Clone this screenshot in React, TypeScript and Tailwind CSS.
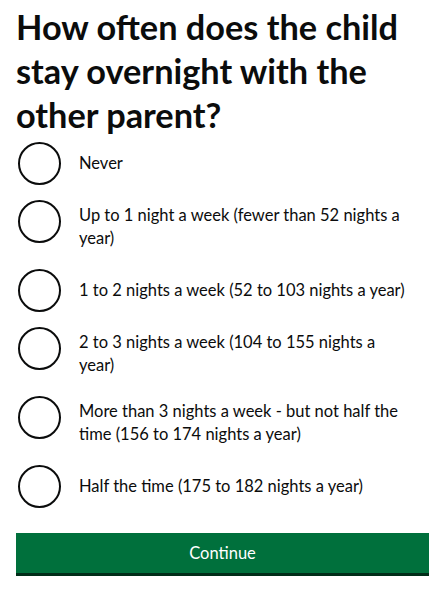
const options = [
  'Never',
  'Up to 1 night a week (fewer than 52 nights a year)',
  '1 to 2 nights a week (52 to 103 nights a year)',
  '2 to 3 nights a week (104 to 155 nights a year)',
  'More than 3 nights a week - but not half the time (156 to 174 nights a year)',
  'Half the time (175 to 182 nights a year)',
];

export default function App() {
  return (
    <div className="min-h-screen bg-white px-4 pt-[5px] text-[#0b0c0c] font-['Lato',sans-serif]">
      <h1 className="text-[34.3px] leading-[44px] font-bold">
        How often does the child stay overnight with the other parent?
      </h1>
      <div className="mt-[5px] flex flex-col gap-[15px] pl-[2px]">
        {options.map((label) => (
          <label key={label} className="flex items-start gap-[18px] cursor-pointer">
            <span className="w-[43px] h-[43px] shrink-0 rounded-full border-2 border-[#0b0c0c] bg-white" />
            <span className="min-h-[43px] flex items-center py-[4px] pr-[18px] text-[16.5px] leading-[23px]">
              {label}
            </span>
          </label>
        ))}
      </div>
      <button className="mt-[25px] w-[413px] h-[40px] bg-[#00703c] text-white text-[16.5px] shadow-[0_3px_0_#002d18]">
        Continue
      </button>
    </div>
  );
}
